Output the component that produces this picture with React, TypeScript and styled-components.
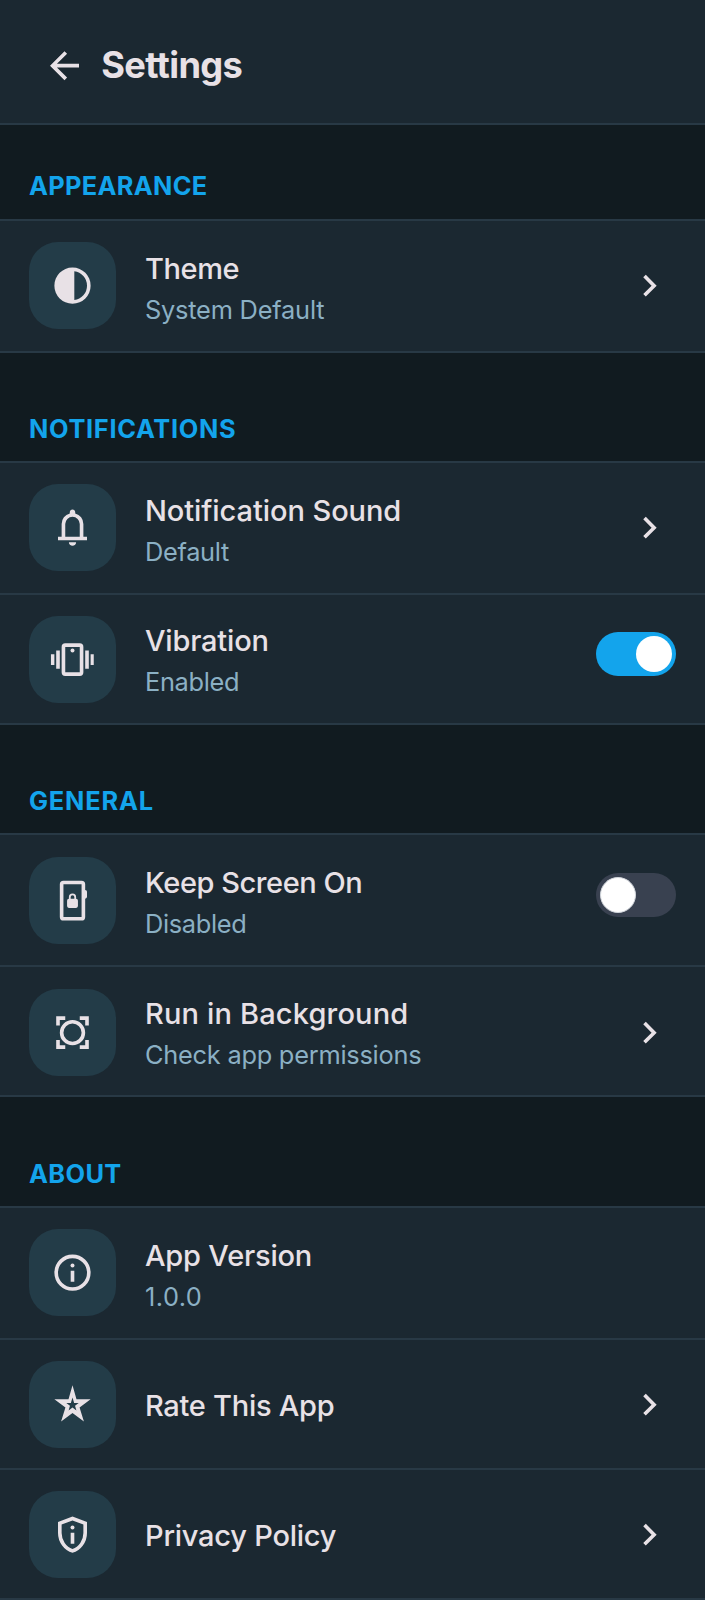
import React from "react";
import styled, { createGlobalStyle } from "styled-components";

const GlobalStyle = createGlobalStyle`
  * { box-sizing: border-box; }
  body { margin: 0; background: #111b20; }
`;

const Page = styled.div`
  width: 100%;
  min-height: 1600px;
  background: #111b20;
  color: #e8e1e6;
  font-family: Inter, "Liberation Sans", sans-serif;
  font-kerning: normal;
`;

const Header = styled.header`
  height: 125px;
  padding: 7.5px 0 0 42.75px;
  display: flex;
  align-items: center;
  gap: 15px;
  background: #1b2831;
  border-bottom: 2px solid #283945;
`;

const Title = styled.h1`
  margin: 0;
  font-size: 36.25px;
  line-height: 45px;
  font-weight: 700;
  letter-spacing: -0.66px;
`;

const SectionHeading = styled.h2<{ $height: number; $gap: number; $tracking: number }>`
  margin: 0;
  height: ${(p) => p.$height}px;
  padding: 0 29px ${(p) => p.$gap}px;
  display: flex;
  align-items: flex-end;
  color: #13a4ec;
  font-size: 25.375px;
  line-height: 32px;
  font-weight: 700;
  letter-spacing: ${(p) => p.$tracking}px;
  text-transform: uppercase;
`;

const List = styled.div`
  background: #1b2831;
  border-top: 2px solid #283945;
`;

const Row = styled.div<{ $first: boolean; $inset: number }>`
  height: ${(p) => (p.$first ? 132 : 130)}px;
  padding: ${(p) => p.$inset}px 29px 0;
  display: flex;
  align-items: flex-start;
  gap: 29px;
  border-bottom: 2px solid #283945;
`;

const Tile = styled.div`
  width: 87px;
  height: 87px;
  flex: none;
  display: flex;
  align-items: center;
  justify-content: center;
  border-radius: 29px;
  background: #233c48;
`;

const Labels = styled.div<{ $height: number }>`
  flex: 1;
  height: ${(p) => p.$height}px;
  display: flex;
  flex-direction: column;
  justify-content: center;
  white-space: nowrap;
`;

const Label = styled.span<{ $tracking: number }>`
  font-size: 29px;
  line-height: 43px;
  font-weight: 500;
  letter-spacing: ${(p) => p.$tracking}px;
`;

const Detail = styled.span<{ $tracking: number }>`
  font-size: 25.375px;
  line-height: 39px;
  color: #8bb0c4;
  letter-spacing: ${(p) => p.$tracking}px;
`;

const ChevronBox = styled.div`
  width: 51px;
  height: 87px;
  flex: none;
  display: flex;
  align-items: center;
  justify-content: center;
`;

const Toggle = styled.div<{ $on: boolean }>`
  width: 80px;
  height: 44px;
  margin-top: 16px;
  padding: 3.6px;
  flex: none;
  display: flex;
  justify-content: ${(p) => (p.$on ? "flex-end" : "flex-start")};
  border-radius: 22px;
  background: ${(p) => (p.$on ? "#13a4ec" : "#394150")};
`;

const Thumb = styled.div<{ $on: boolean }>`
  width: 36.8px;
  height: 36.8px;
  border-radius: 50%;
  background: #fff;
  border: ${(p) => (p.$on ? "none" : "1px solid #d1d5db")};
`;

const Glyph = styled.svg`
  width: 43.5px;
  height: 43.5px;
  display: block;
  flex: none;
  fill: currentColor;
  transform: translate(-0.25px, -0.1px);
`;

const Symbol = ({ d }: { d: string }) => (
  <Glyph viewBox="0 -960 960 960">
    <path d={d} />
  </Glyph>
);

const BackIcon = () => (
  <Symbol d="m313-440 224 224-57 56-320-320 320-320 57 56-224 224h487v80H313Z" />
);

const ChevronIcon = () => <Symbol d="M504-480 320-664l56-56 240 240-240 240-56-56 184-184Z" />;

const ContrastIcon = () => (
  <Symbol d="M480-80q-83 0-156-31.5T197-197q-54-54-85.5-127T80-480q0-83 31.5-156T197-763q54-54 127-85.5T480-880q83 0 156 31.5T763-763q54 54 85.5 127T880-480q0 83-31.5 156T763-197q-54 54-127 85.5T480-80Zm40-83q119-15 199.5-104.5T800-480q0-123-80.5-212.5T520-797v634Z" />
);

const BellIcon = () => (
  <Symbol d="M160-200v-80h80v-280q0-83 50-147.5T420-792v-28q0-25 17.5-42.5T480-880q25 0 42.5 17.5T540-820v28q80 20 130 84.5T720-560v280h80v80H160Zm320 120q-33 0-56.5-23.5T400-160h160q0 33-23.5 56.5T480-80ZM320-280h320v-280q0-66-47-113t-113-47q-66 0-113 47t-47 113v280Z" />
);

const VibrateIcon = () => (
  <Glyph viewBox="0 0 24 24">
    <path d="M0 9h2v6H0zM3 7h2v10H3zM19 7h2v10h-2zM22 9h2v6h-2z" />
    <path
      fillRule="evenodd"
      d="M8 3h8a2 2 0 0 1 2 2v14a2 2 0 0 1-2 2H8a2 2 0 0 1-2-2V5a2 2 0 0 1 2-2zM8 5v14h8V5z"
    />
    <circle cx="12" cy="7" r="1.1" />
  </Glyph>
);

const ScreenLockIcon = () => (
  <Glyph viewBox="0 0 24 24">
    <path
      fillRule="evenodd"
      d="M7 1h10a2 2 0 0 1 2 2v3.1a1 1 0 0 1 1 1v2.8a1 1 0 0 1-1 1V21a2 2 0 0 1-2 2H7a2 2 0 0 1-2-2V3a2 2 0 0 1 2-2zM7 3v18h10V3z"
    />
    <path
      fillRule="evenodd"
      d="M10 16a1 1 0 0 1-1-1v-3a1 1 0 0 1 1-1v-1a2 2 0 0 1 4 0v1a1 1 0 0 1 1 1v3a1 1 0 0 1-1 1zM11 11h2v-1a1 1 0 0 0-2 0z"
    />
  </Glyph>
);

const BackgroundIcon = () => (
  <Glyph viewBox="0 0 24 24">
    <path d="M3 3h5v2H5v3H3zM16 3h5v5h-2V5h-3zM3 16h2v3h3v2H3zM19 16h2v5h-5v-2h3z" />
    <circle cx="12" cy="12" r="6" fill="none" stroke="currentColor" strokeWidth="2" />
  </Glyph>
);

const InfoIcon = () => (
  <Glyph viewBox="0 0 24 24">
    <circle cx="12" cy="12" r="9" fill="none" stroke="currentColor" strokeWidth="2" />
    <circle cx="12" cy="8" r="1.1" />
    <path d="M11 11h2v6h-2z" />
  </Glyph>
);

const StarIcon = () => (
  <Glyph viewBox="0 0 24 24">
    <path
      fillRule="evenodd"
      d="M12 1.3 14.2 9H22l-6.1 4.6 2.4 7.7-6.3-4.75-6.3 4.75 2.4-7.7L2 9h7.8zM12 8.1l-.9 3H8.6l2 1.55-.75 2.55L12 13.6l2.15 1.6-.75-2.55 2-1.55h-2.5z"
    />
  </Glyph>
);

const ShieldInfoIcon = () => (
  <Glyph viewBox="0 -960 960 960">
    <path d="M480-80q-139-35-229.5-159.5T160-516v-244l320-120 320 120v244q0 152-90.5 276.5T480-80Zm0-84q104-33 172-132t68-220v-189l-240-90-240 90v189q0 121 68 220t172 132Z" />
    <circle cx="480" cy="-640" r="44" />
    <path d="M440-520h80v240h-80z" />
  </Glyph>
);

type Item = {
  label: string;
  tracking: number;
  detail?: string;
  detailTracking?: number;
  icon: () => React.JSX.Element;
  control?: "chevron" | "on" | "off";
};

type Section = {
  title: string;
  tracking: number;
  space: number;
  gap: number;
  inset: number;
  items: Item[];
};

const sections: Section[] = [
  {
    title: "Appearance",
    tracking: 0.33,
    space: 94,
    gap: 17,
    inset: 21,
    items: [
      {
        label: "Theme",
        tracking: -0.4,
        detail: "System Default",
        detailTracking: -0.21,
        icon: ContrastIcon,
        control: "chevron",
      },
    ],
  },
  {
    title: "Notifications",
    tracking: 0.68,
    space: 108,
    gap: 16,
    inset: 21,
    items: [
      {
        label: "Notification Sound",
        tracking: -0.07,
        detail: "Default",
        detailTracking: -0.3,
        icon: BellIcon,
        control: "chevron",
      },
      {
        label: "Vibration",
        tracking: -0.2,
        detail: "Enabled",
        detailTracking: -0.32,
        icon: VibrateIcon,
        control: "on",
      },
    ],
  },
  {
    title: "General",
    tracking: 0.83,
    space: 108,
    gap: 16,
    inset: 22,
    items: [
      {
        label: "Keep Screen On",
        tracking: -0.45,
        detail: "Disabled",
        detailTracking: -0.32,
        icon: ScreenLockIcon,
        control: "off",
      },
      {
        label: "Run in Background",
        tracking: 0.16,
        detail: "Check app permissions",
        detailTracking: -0.24,
        icon: BackgroundIcon,
        control: "chevron",
      },
    ],
  },
  {
    title: "About",
    tracking: 0.38,
    space: 109,
    gap: 16.5,
    inset: 21,
    items: [
      {
        label: "App Version",
        tracking: -0.2,
        detail: "1.0.0",
        detailTracking: 0.45,
        icon: InfoIcon,
      },
      { label: "Rate This App", tracking: -0.28, icon: StarIcon, control: "chevron" },
      { label: "Privacy Policy", tracking: -0.23, icon: ShieldInfoIcon, control: "chevron" },
    ],
  },
];

export default function App() {
  return (
    <Page>
      <GlobalStyle />
      <Header>
        <BackIcon />
        <Title>Settings</Title>
      </Header>
      {sections.map((section) => (
        <section key={section.title}>
          <SectionHeading
            $height={section.space}
            $gap={section.gap}
            $tracking={section.tracking}
          >
            {section.title}
          </SectionHeading>
          <List>
            {section.items.map((item, i) => (
              <Row key={item.label} $first={i === 0} $inset={section.inset}>
                <Tile>
                  <item.icon />
                </Tile>
                <Labels $height={(i === 0 ? 112 : 109) - section.inset}>
                  <Label $tracking={item.tracking}>{item.label}</Label>
                  {item.detail && (
                    <Detail $tracking={item.detailTracking ?? 0}>{item.detail}</Detail>
                  )}
                </Labels>
                {item.control === "chevron" && (
                  <ChevronBox>
                    <ChevronIcon />
                  </ChevronBox>
                )}
                {(item.control === "on" || item.control === "off") && (
                  <Toggle $on={item.control === "on"}>
                    <Thumb $on={item.control === "on"} />
                  </Toggle>
                )}
              </Row>
            ))}
          </List>
        </section>
      ))}
    </Page>
  );
}
